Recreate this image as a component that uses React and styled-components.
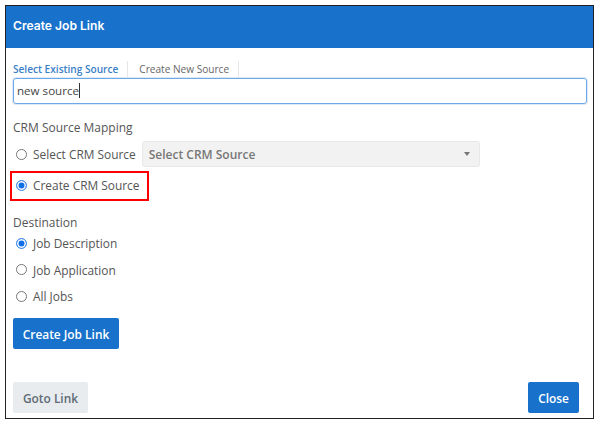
import React from "react";
import styled, { createGlobalStyle } from "styled-components";

const GlobalStyle = createGlobalStyle`
  html, body {
    margin: 0;
    padding: 0;
    background: #fff;
    font-family: "Open Sans", "Noto Sans", sans-serif;
  }
`;

const Page = styled.div`
  width: 600px;
  height: 425px;
  padding: 5px 6px 6px 5px;
  box-sizing: border-box;
`;

const Modal = styled.div`
  height: 100%;
  box-sizing: border-box;
  border: 1.5px solid #222;
  display: flex;
  flex-direction: column;
  background: #fff;
`;

const Header = styled.div`
  height: 42px;
  flex: none;
  box-sizing: border-box;
  display: flex;
  align-items: center;
  padding: 0 7px 3px;
  background: #1872cc;
  color: #fff;
  font-family: Inter, sans-serif;
  font-weight: 600;
  font-size: 12.1px;
`;

const Body = styled.div`
  flex: 1;
  padding: 13px 6px 0 7px;
  display: flex;
  flex-direction: column;
`;

const Tabs = styled.div`
  display: flex;
  height: 16px;
  align-items: center;
`;

const Tab = styled.div`
  font-size: 10.1px;
  padding-right: 9px;
  margin-right: 11px;
  line-height: 16px;
  border-right: 1px solid #e6e6e6;
  font-weight: ${(p) => (p.$active ? 600 : 400)};
  color: ${(p) => (p.$active ? "#3a7fc8" : "#666")};
`;

const TextBox = styled.div`
  height: 26px;
  box-sizing: border-box;
  margin-top: 1px;
  border: 1px solid #6ea8e6;
  border-radius: 3px;
  box-shadow: 0 0 0 1px #dbe9f8;
  padding: 0 0 1px 3px;
  display: flex;
  align-items: center;
  font-size: 11.6px;
  color: #444;
`;

const Caret = styled.span`
  width: 1px;
  height: 15px;
  background: #333;
`;

const SectionLabel = styled.div`
  font-size: 12px;
  line-height: 16px;
  color: #555;
  margin-top: ${(p) => p.$top}px;
`;

const Row = styled.div`
  display: flex;
  align-items: center;
  height: 26px;
  margin-top: ${(p) => p.$top || 0}px;
`;

const Option = styled.label`
  display: inline-flex;
  align-items: center;
  gap: 6px;
  padding-left: 3px;
  font-size: 11.9px;
  color: #555;
  white-space: nowrap;
`;

const Radio = styled.span`
  width: 11px;
  height: 11px;
  box-sizing: border-box;
  border-radius: 50%;
  flex: none;
  border: 1px solid #777;
  background: #fff;
  ${(p) =>
    p.$checked &&
    `
    border: 1px solid #4a90e8;
    box-shadow: inset 0 0 0 1.5px #fff;
    background: #0f6fe8;
  `}
`;

const FakeSelect = styled.div`
  margin-left: 6px;
  width: 338px;
  height: 26px;
  box-sizing: border-box;
  border: 1px solid #e8e8e8;
  border-radius: 3px;
  background: #f2f2f2;
  display: flex;
  align-items: center;
  justify-content: space-between;
  padding: 0 9px 0 6px;
  font-size: 12px;
  font-weight: 600;
  color: #777;
`;

const Arrow = styled.span`
  width: 0;
  height: 0;
  border-left: 3px solid transparent;
  border-right: 3px solid transparent;
  border-top: 4px solid #777;
`;

const Highlight = styled.div`
  align-self: flex-start;
  width: 139px;
  height: 30px;
  box-sizing: border-box;
  margin-left: -3px;
  margin-top: 4px;
  border: 2px solid #f00;
  display: flex;
  align-items: center;
  padding: 0 0 2px 1px;
`;

const DestinationList = styled.div`
  display: flex;
  flex-direction: column;
  gap: 0.5px;
  margin-top: -1px;
`;

const Button = styled.button`
  font-family: inherit;
  font-size: 11.9px;
  font-weight: 600;
  height: 31px;
  border: none;
  border-radius: 2px;
  padding: 0;
  width: ${(p) => p.$width}px;
  background: ${(p) => (p.$muted ? "#e8ecef" : "#1872cc")};
  color: ${(p) => (p.$muted ? "#5f6b75" : "#fff")};
`;

const SubmitRow = styled.div`
  margin-top: 9px;
`;

const Footer = styled.div`
  margin-top: auto;
  padding: 0 14px 5px 7px;
  display: flex;
  justify-content: space-between;
`;

const App = () => {
  return (
    <Page>
      <GlobalStyle />
      <Modal>
        <Header>Create Job Link</Header>
        <Body>
          <Tabs>
            <Tab $active>Select Existing Source</Tab>
            <Tab>Create New Source</Tab>
          </Tabs>
          <TextBox>
            new source
            <Caret />
          </TextBox>
          <SectionLabel $top={16}>CRM Source Mapping</SectionLabel>
          <Row $top={5}>
            <Option>
              <Radio />
              Select CRM Source
            </Option>
            <FakeSelect>
              Select CRM Source
              <Arrow />
            </FakeSelect>
          </Row>
          <Highlight>
            <Option>
              <Radio $checked />
              Create CRM Source
            </Option>
          </Highlight>
          <SectionLabel $top={14}>Destination</SectionLabel>
          <DestinationList>
            <Row>
              <Option>
                <Radio $checked />
                Job Description
              </Option>
            </Row>
            <Row>
              <Option>
                <Radio />
                Job Application
              </Option>
            </Row>
            <Row>
              <Option>
                <Radio />
                All Jobs
              </Option>
            </Row>
          </DestinationList>
          <SubmitRow>
            <Button $width={106}>Create Job Link</Button>
          </SubmitRow>
        </Body>
        <Footer>
          <Button $muted $width={75}>
            Goto Link
          </Button>
          <Button $width={51}>Close</Button>
        </Footer>
      </Modal>
    </Page>
  );
};

export default App;
